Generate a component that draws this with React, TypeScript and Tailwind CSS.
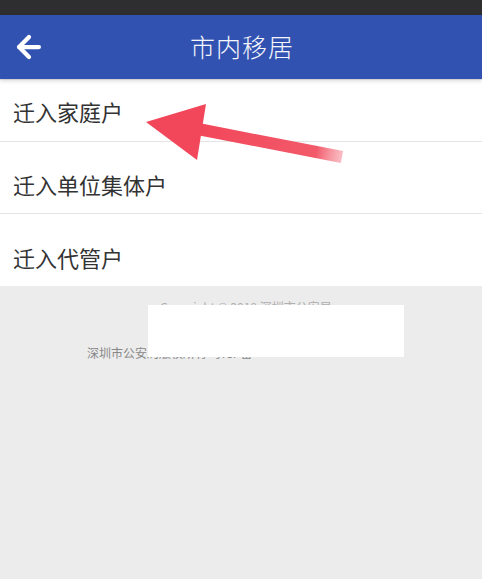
import { ArrowLeft } from 'lucide-react';

const items = [
    { label: '迁入家庭户', row: 'h-[62px] pt-[2px]' },
    { label: '迁入单位集体户', row: 'h-[72px] pt-[14px]' },
    { label: '迁入代管户', row: 'h-[72px] pt-[14px]' },
];

export default function App() {
    return (
        <div
            className="relative w-[482px] h-[579px] overflow-hidden bg-[#ececec]"
            style={{ fontFamily: '"Noto Sans CJK SC", "Noto Sans", sans-serif' }}
        >
            <div className="h-[15px] bg-[#2e2e30]" />
            <div className="relative h-[64px] bg-[#3252b2] flex items-center justify-center shadow-[0_2px_4px_rgba(0,0,0,0.15)]">
                <ArrowLeft className="absolute left-[12px] top-[15px] text-white" size={34} strokeWidth={3} />
                <span className="text-[#f4f6fb] text-[25px] font-light tracking-[1px] pl-[2px]">市内移居</span>
            </div>

            <div className="bg-white mt-[1px]">
                {items.map((it, i) => (
                    <div
                        key={it.label}
                        className={`flex items-center px-[13px] ${it.row} ${i < 2 ? 'border-b border-[#e4e4e4]' : ''}`}
                    >
                        <span className="text-[22px] text-[#333]">{it.label}</span>
                    </div>
                ))}
            </div>

            <div className="pt-[12px] text-[12px] text-[#888]">
                <p className="pl-[160px] opacity-60">Copyright © 2019 深圳市公安局</p>
                <p className="mt-[28px] pl-[87px]">深圳市公安局版权所有 粤ICP备</p>
            </div>

            {/* redaction box */}
            <div className="absolute left-[148px] top-[305px] w-[256px] h-[52px] bg-white" />

            {/* red pointer arrow */}
            <svg className="absolute left-0 top-0" width="482" height="579" viewBox="0 0 482 579">
                <defs>
                    <linearGradient id="shaft" x1="200" y1="130" x2="345" y2="158" gradientUnits="userSpaceOnUse">
                        <stop offset="0" stopColor="#f2475a" />
                        <stop offset="0.8" stopColor="#f25a6a" />
                        <stop offset="1" stopColor="#f7a0aa" stopOpacity="0.6" />
                    </linearGradient>
                </defs>
                <line x1="198" y1="129" x2="342" y2="157" stroke="url(#shaft)" strokeWidth="12" />
                <polygon points="146,122 206,104 197,160" fill="#f2475a" />
            </svg>
        </div>
    );
}
